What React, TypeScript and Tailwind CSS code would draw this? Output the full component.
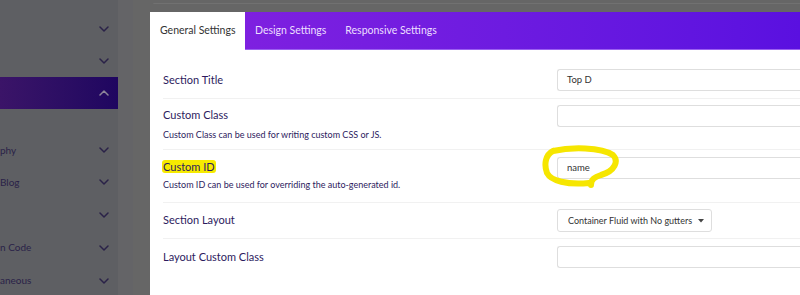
import React from "react";

const font = { fontFamily: "Lato, 'Noto Sans', sans-serif" };

function Chevron({ up = false, light = false }: { up?: boolean; light?: boolean }) {
  return (
    <svg width="10" height="6" viewBox="0 0 10 6" className="shrink-0">
      <path
        d={up ? "M1 5 L5 1 L9 5" : "M1 1 L5 5 L9 1"}
        fill="none"
        stroke={light ? "#8d8599" : "#2a2248"}
        strokeWidth="1.5"
        strokeLinecap="round"
        strokeLinejoin="round"
      />
    </svg>
  );
}

const sideItems = [
  { text: "", h: "h-[32px]" },
  { text: "", h: "h-[32px]" },
  { text: "", h: "h-[32px]", active: true },
  { text: "", h: "h-[25px]", none: true },
  { text: "phy", h: "h-[32px]" },
  { text: "Blog", h: "h-[32px]" },
  { text: "", h: "h-[33px]" },
  { text: "n Code", h: "h-[33px]" },
  { text: "aneous", h: "h-[33px]" },
];

function Sidebar() {
  return (
    <div className="w-[118px] shrink-0 bg-[#5e5f63] flex flex-col pt-[13px] overflow-hidden">
      {sideItems.map((it, i) =>
        it.none ? (
          <div key={i} className={`${it.h} shrink-0`} />
        ) : (
          <div
            key={i}
            className={`${it.h} shrink-0 flex items-center justify-between pr-[9px] text-[10px] text-[#2a2248] ${
              it.active ? "bg-gradient-to-r from-[#3b1468] to-[#1f0660]" : ""
            }`}
          >
            <span>{it.text}</span>
            <Chevron up={it.active} light={it.active} />
          </div>
        )
      )}
    </div>
  );
}

function Input({ value = "" }: { value?: string }) {
  return (
    <div className="h-[22px] w-full border border-[#dedede] rounded-l-[3px] border-r-0 bg-white flex items-center pl-[9px] text-[9.5px] text-[#333]">
      {value}
    </div>
  );
}

export default function App() {
  return (
    <div className="w-[800px] h-[295px] flex overflow-hidden bg-[#666666]" style={font}>
      <Sidebar />
      <div className="w-[15px] shrink-0 bg-[#646467]" />
      <div className="w-[17px] shrink-0 bg-[#666666]" />
      <div className="flex-1 flex flex-col min-w-0">
        <div className="h-[12px] shrink-0 pt-[3px]">
          <div className="border-t border-[#717171] rounded-tl-[3px] ml-[3px]" />
        </div>
        <div className="flex-1 bg-white flex flex-col relative">
          {/* tabs */}
          <div className="h-[38px] shrink-0 flex bg-gradient-to-r from-[#8421e0] to-[#5a10e0] border-b border-[#9b60f0]">
            <div className="w-[95px] h-[38px] bg-white flex items-center pl-[10px] text-[10.5px] text-[#333]">
              General Settings
            </div>
            <div className="flex items-center pl-[10px] text-[10.5px] text-[#ecdfff]">Design Settings</div>
            <div className="flex items-center pl-[19px] text-[10.5px] text-[#ecdfff]">Responsive Settings</div>
          </div>
          {/* rows */}
          <div className="pt-[12px] pl-[13px] text-[#2d1b5e]">
            <div className="h-[37px] flex items-center border-b border-[#f1f1f1]">
              <div className="w-[394px] shrink-0 text-[11px]">Section Title</div>
              <div className="flex-1">
                <Input value="Top D" />
              </div>
            </div>
            <div className="h-[51px] flex border-b border-[#f1f1f1]">
              <div className="w-[394px] shrink-0 pt-[8px]">
                <div className="text-[11px] leading-[16px]">Custom Class</div>
                <div className="text-[9px] leading-[14px] mt-[5px]">
                  Custom Class can be used for writing custom CSS or JS.
                </div>
              </div>
              <div className="flex-1 pt-[6px]">
                <Input />
              </div>
            </div>
            <div className="h-[53px] flex border-b border-[#f1f1f1]">
              <div className="w-[394px] shrink-0 pt-[9px]">
                <div className="text-[11px] leading-[16px]">
                  <span className="bg-[#f6ea00] rounded-[3px] px-[1px] -ml-[1px]">Custom ID</span>
                </div>
                <div className="text-[9px] leading-[14px] mt-[3px]">
                  Custom ID can be used for overriding the auto-generated id.
                </div>
              </div>
              <div className="flex-1 pt-[7px]">
                <Input value="name" />
              </div>
            </div>
            <div className="h-[36px] flex items-center border-b border-[#f1f1f1]">
              <div className="w-[394px] shrink-0 text-[11px]">Section Layout</div>
              <div className="flex-1">
                <div className="h-[23px] w-[155px] border border-[#dedede] rounded-[3px] flex items-center pl-[10px] gap-[6px] text-[9px] text-[#333]">
                  Container Fluid with No gutters
                  <svg width="6" height="4" viewBox="0 0 6 4">
                    <path d="M0 0 L6 0 L3 3.5 Z" fill="#444" />
                  </svg>
                </div>
              </div>
            </div>
            <div className="h-[36px] flex items-center">
              <div className="w-[394px] shrink-0 text-[11px]">Layout Custom Class</div>
              <div className="flex-1">
                <Input />
              </div>
            </div>
          </div>
          {/* yellow scribble around the input */}
          <svg
            className="absolute left-[391px] top-[133px] pointer-events-none"
            width="80"
            height="44"
            viewBox="0 0 80 44"
          >
            <path
              d="M12 6 C30 2 60 2 72 10 C78 16 74 26 60 30 C54 32 50 34 50 40 M12 6 C4 10 3 20 6 28 C10 36 26 40 48 38"
              fill="none"
              stroke="#f6e600"
              strokeWidth="6"
              strokeLinecap="round"
              strokeLinejoin="round"
            />
          </svg>
        </div>
      </div>
    </div>
  );
}
